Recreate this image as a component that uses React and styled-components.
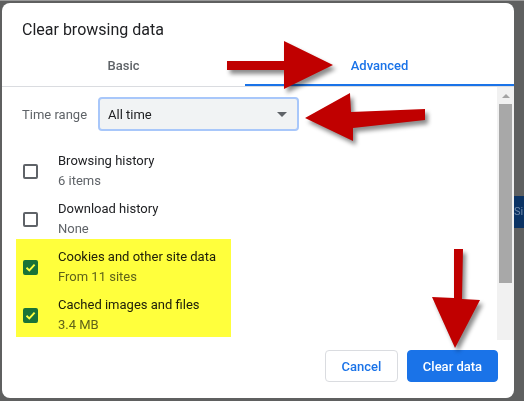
import React from "react";
import styled, { createGlobalStyle } from "styled-components";

const GlobalStyle = createGlobalStyle`
	html, body {
		margin: 0;
		padding: 0;
		background: #5f6060;
		font-family: Roboto, "Liberation Sans", Arial, sans-serif;
	}
`;

const Page = styled.div`
	position: relative;
	width: 524px;
	height: 401px;
	display: flex;
	padding: 3px 0 0 2px;
	box-sizing: border-box;
	overflow: hidden;
	border-top: 1px solid #9a9a9a;
`;

const Dialog = styled.div`
	width: 512px;
	height: 395px;
	margin-top: -1px;
	background: #fff;
	border-radius: 8px;
	display: flex;
	flex-direction: column;
	overflow: hidden;
	flex-shrink: 0;
`;

const Title = styled.div`
	padding: 17px 20px 0;
	height: 20px;
	line-height: 20px;
	font-size: 16px;
	color: #202124;
`;

const Tabs = styled.div`
	display: grid;
	grid-template-columns: 243px 1fr;
	border-bottom: 1px solid #dadce0;
`;

const Tab = styled.div`
	height: 46px;
	box-sizing: border-box;
	padding-top: 17px;
	line-height: 18px;
	text-align: center;
	font-size: 13px;
	font-weight: 500;
	color: ${(p) => (p.active ? "#1a73e8" : "#5f6368")};
	border-bottom: 2px solid ${(p) => (p.active ? "#1a73e8" : "transparent")};
`;

const Body = styled.div`
	height: 253px;
	display: flex;
`;

const Content = styled.div`
	flex: 1;
	padding: 10px 0 0 20px;
`;

const RangeRow = styled.div`
	display: flex;
	align-items: center;
	gap: 12px;
	margin-bottom: 16px;
`;

const RangeLabel = styled.span`
	width: 64px;
	white-space: nowrap;
	font-size: 13px;
	color: #5f6368;
`;

const Select = styled.div`
	width: 201px;
	height: 34px;
	box-sizing: border-box;
	display: flex;
	align-items: center;
	justify-content: space-between;
	padding: 0 10px 0 8px;
	background: #f1f3f4;
	border: 2px solid #a8c7fa;
	border-radius: 4px;
	font-size: 13px;
	color: #202124;
`;

const Caret = styled.span`
	width: 0;
	height: 0;
	border-left: 5px solid transparent;
	border-right: 5px solid transparent;
	border-top: 5px solid #5f6368;
`;

const Highlight = styled.div`
	position: relative;

	&::after {
		content: "";
		position: absolute;
		top: -4px;
		bottom: 2px;
		left: -6px;
		width: 215px;
		background: #ffff3c;
		mix-blend-mode: multiply;
		pointer-events: none;
	}
`;

const Row = styled.div`
	height: 48px;
	display: flex;
	align-items: center;
	gap: 20px;
`;

const Box = styled.span`
	width: 15px;
	height: 15px;
	box-sizing: border-box;
	margin-left: 1px;
	flex-shrink: 0;
	border-radius: 2px;
	border: 2px solid ${(p) => (p.checked ? "#1a73e8" : "#5f6368")};
	background: ${(p) => (p.checked ? "#1a73e8" : "#fff")};
	display: flex;
	align-items: center;
	justify-content: center;
`;

const Labels = styled.div`
	display: flex;
	flex-direction: column;
	font-size: 13px;
	line-height: 20px;
`;

const Primary = styled.span`
	color: #202124;
`;

const Secondary = styled.span`
	color: #5f6368;
`;

const Scrollbar = styled.div`
	width: 17px;
	background: #f1f1f1;
	display: flex;
	flex-direction: column;
	align-items: center;
`;

const UpArrow = styled.span`
	margin-top: 7px;
	width: 0;
	height: 0;
	border-left: 4px solid transparent;
	border-right: 4px solid transparent;
	border-bottom: 4px solid #a3a3a3;
`;

const Thumb = styled.div`
	margin-top: 6px;
	width: 13px;
	height: 179px;
	background: #a8a8a8;
`;

const Footer = styled.div`
	display: flex;
	justify-content: flex-end;
	gap: 9px;
	padding: 10px 16px 16px;
`;

const Button = styled.button`
	height: 32px;
	padding: 0;
	width: ${(p) => p.width}px;
	border-radius: 4px;
	font-family: inherit;
	font-size: 13px;
	font-weight: 500;
	border: 1px solid ${(p) => (p.primary ? "#1a73e8" : "#dadce0")};
	background: ${(p) => (p.primary ? "#1a73e8" : "#fff")};
	color: ${(p) => (p.primary ? "#fff" : "#1a73e8")};
`;

const Backdrop = styled.div`
	flex: 1;
	padding-top: 192px;
`;

const SignInButton = styled.div`
	height: 32px;
	background: #0b3364;
	color: #6e87a8;
	font-size: 11px;
	line-height: 32px;
	white-space: nowrap;
`;

const Annotations = styled.svg`
	position: absolute;
	left: 0;
	top: 0;
	pointer-events: none;
	filter: drop-shadow(3px 4px 2px rgba(0, 0, 0, 0.45));
`;

const Check = () => (
	<svg width="11" height="11" viewBox="0 0 11 11">
		<path d="M1.5 5.8 L4.3 8.4 L9.6 2.6" fill="none" stroke="#fff" strokeWidth="1.9" />
	</svg>
);

const items = [
	{ title: "Browsing history", detail: "6 items", checked: false },
	{ title: "Download history", detail: "None", checked: false },
	{ title: "Cookies and other site data", detail: "From 11 sites", checked: true },
	{ title: "Cached images and files", detail: "3.4 MB", checked: true },
];

const Item = ({ title, detail, checked }) => (
	<Row>
		<Box checked={checked}>{checked && <Check />}</Box>
		<Labels>
			<Primary>{title}</Primary>
			<Secondary>{detail}</Secondary>
		</Labels>
	</Row>
);

const App = () => {
	const plain = items.filter((i) => !i.checked);
	const marked = items.filter((i) => i.checked);
	return (
		<Page>
			<GlobalStyle />
			<Dialog>
				<Title>Clear browsing data</Title>
				<Tabs>
					<Tab>Basic</Tab>
					<Tab active>Advanced</Tab>
				</Tabs>
				<Body>
					<Content>
						<RangeRow>
							<RangeLabel>Time range</RangeLabel>
							<Select>
								All time
								<Caret />
							</Select>
						</RangeRow>
						{plain.map((i) => (
							<Item key={i.title} {...i} />
						))}
						<Highlight>
							{marked.map((i) => (
								<Item key={i.title} {...i} />
							))}
						</Highlight>
					</Content>
					<Scrollbar>
						<UpArrow />
						<Thumb />
					</Scrollbar>
				</Body>
				<Footer>
					<Button width={73}>Cancel</Button>
					<Button primary width={91}>Clear data</Button>
				</Footer>
			</Dialog>
			<Backdrop>
				<SignInButton>Si</SignInButton>
			</Backdrop>
			<Annotations width="524" height="401" viewBox="0 0 524 401">
				<g fill="#c00000">
					<polygon points="227,60 284,60 284,40 333,64 284,88 284,69 227,69" />
					<polygon points="305,117 350,92 351,111 425,108 425,119 353,127 353,140" />
					<polygon points="454,248 463,248 462,298 480,299 455,347 432,296 454,297" />
				</g>
			</Annotations>
		</Page>
	);
};

export default App;
